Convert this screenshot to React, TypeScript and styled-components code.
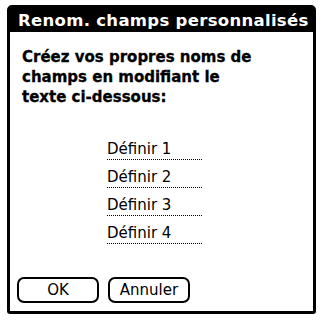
import React from "react";
import styled, { createGlobalStyle } from "styled-components";

const Global = createGlobalStyle`
  html, body { margin: 0; padding: 0; background: #fff; }
  body { width: 323px; height: 320px; overflow: hidden; }
`;

const Dialog = styled.div`
  box-sizing: border-box;
  margin: 5px 0 0 7px;
  width: 309px;
  height: 309px;
  border: 3px solid #000;
  border-radius: 5px 5px 3px 3px;
  display: flex;
  flex-direction: column;
  background: #fff;
  font-family: "DejaVu Sans", "Liberation Sans", sans-serif;
  color: #000;
`;

const TitleBar = styled.div`
  background: #000;
  color: #fff;
  height: 24px;
  display: flex;
  align-items: center;
  padding-left: 8px;
  font-weight: bold;
  font-size: 16.5px;
  letter-spacing: 0.3px;
  white-space: nowrap;
`;

const Body = styled.div`
  flex: 1;
  display: flex;
  flex-direction: column;
  padding: 15px 7px 8px 7px;
`;

const Message = styled.div`
  font-weight: bold;
  font-size: 15px;
  line-height: 20px;
  padding-left: 5px;
  letter-spacing: 0;
  -webkit-text-stroke: 0.3px #000;
`;

const Fields = styled.div`
  display: flex;
  flex-direction: column;
  margin-top: 33px;
  margin-left: 90px;
  gap: 8px;
`;

const Field = styled.div`
  width: 96px;
  height: 20px;
  font-size: 15px;
  line-height: 19px;
  white-space: nowrap;
  background-image: repeating-linear-gradient(to right, #000 0 1px, transparent 1px 2px);
  background-size: 100% 1px;
  background-repeat: no-repeat;
  background-position: left bottom;
`;

const Buttons = styled.div`
  margin-top: auto;
  display: flex;
  gap: 9px;
`;

const Button = styled.button<{ $w: number }>`
  box-sizing: border-box;
  width: ${(p) => p.$w}px;
  height: 26px;
  border: 2px solid #000;
  border-radius: 7px;
  background: #fff;
  color: #000;
  font-family: "DejaVu Sans", "Liberation Sans", sans-serif;
  font-size: 15px;
  padding: 0;
  display: flex;
  align-items: center;
  justify-content: center;
`;

export default function App() {
  return (
    <>
      <Global />
      <Dialog>
        <TitleBar>Renom. champs personnalisés</TitleBar>
        <Body>
          <Message>
            Créez vos propres noms de
            <br />
            champs en modifiant le
            <br />
            texte ci-dessous:
          </Message>
          <Fields>
            <Field>Définir 1</Field>
            <Field>Définir 2</Field>
            <Field>Définir 3</Field>
            <Field>Définir 4</Field>
          </Fields>
          <Buttons>
            <Button $w={82}>OK</Button>
            <Button $w={82}>Annuler</Button>
          </Buttons>
        </Body>
      </Dialog>
    </>
  );
}
